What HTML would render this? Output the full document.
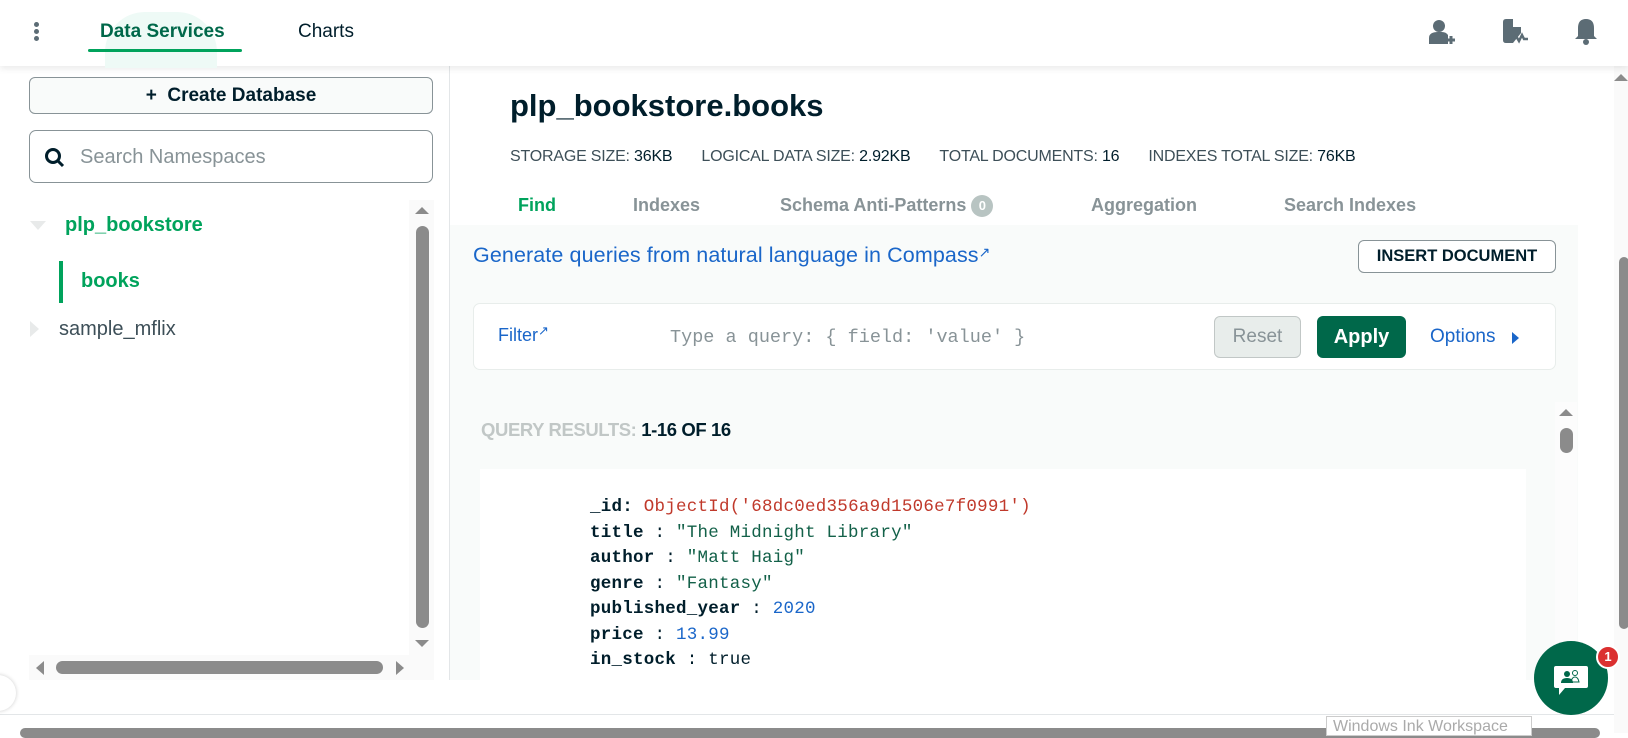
<!DOCTYPE html>
<html><head><meta charset="utf-8"><style>
*{box-sizing:border-box;margin:0;padding:0}
body{width:1628px;height:733px;overflow:hidden;background:#fff;font-family:"Liberation Sans",sans-serif;position:relative;color:#001e2b}
.a{position:absolute}
.mono{font-family:"Liberation Mono",monospace}
</style></head><body>
<!-- header -->
<div class="a" style="left:0;top:0;width:1628px;height:66px;background:#fff;box-shadow:0 3px 6px rgba(0,0,0,.08);z-index:2">
  <div class="a" style="left:105px;top:12px;width:112px;height:56px;background:#eefaf6;border-radius:40px 40px 0 0"></div>
  <div class="a" style="left:34px;top:22px;width:5px;height:5px;border-radius:50%;background:#5c6c75;box-shadow:0 7px 0 #5c6c75,0 14px 0 #5c6c75"></div>
  <div class="a" style="left:100px;top:21px;font-size:19px;font-weight:bold;color:#00684a">Data Services</div>
  <div class="a" style="left:88px;top:49px;width:154px;height:3px;background:#00a35c;border-radius:2px"></div>
  <div class="a" style="left:298px;top:21px;font-size:19px;color:#001e2b">Charts</div>
  <svg class="a" style="left:1428px;top:18px" width="28" height="30" viewBox="0 0 28 30"><circle cx="11" cy="8" r="6" fill="#5c6c75"/><path d="M1 26v-6q0-6 9-6h4q4 0 6 3v9z" fill="#5c6c75"/><path d="M19 22h8M23 18v8" stroke="#5c6c75" stroke-width="3"/></svg>
  <svg class="a" style="left:1500px;top:18px" width="30" height="30" viewBox="0 0 30 30"><path d="M3 4q0-3 3-3h7v8h8v6l-8 10H6q-3 0-3-3z" fill="#5c6c75"/><path d="M12 22l4-4 3 5 3-6 2 4h4" stroke="#5c6c75" stroke-width="2.5" fill="none"/></svg>
  <svg class="a" style="left:1573px;top:17px" width="26" height="30" viewBox="0 0 26 30"><path d="M13 2q8 0 8 9v8l3 3H2l3-3v-8q0-9 8-9z" fill="#5c6c75"/><circle cx="13" cy="25" r="3" fill="#5c6c75"/></svg>
</div>
<!-- sidebar -->
<div class="a" style="left:449px;top:66px;width:1px;height:614px;background:#e3e6e8"></div>
<div class="a" style="left:29px;top:77px;width:404px;height:37px;border:1px solid #889397;border-radius:6px;background:#f9fbfa;text-align:center;font-size:19px;font-weight:bold;line-height:35px">+&nbsp; Create Database</div>
<div class="a" style="left:29px;top:130px;width:404px;height:53px;border:1px solid #889397;border-radius:7px;background:#fff"></div>
<svg class="a" style="left:44px;top:147px" width="22" height="22" viewBox="0 0 22 22"><circle cx="9" cy="9" r="6.5" stroke="#001e2b" stroke-width="3" fill="none"/><path d="M14 14l5 5" stroke="#001e2b" stroke-width="3"/></svg>
<div class="a" style="left:80px;top:146px;font-size:20px;color:#889397">Search Namespaces</div>
<div class="a" style="left:30px;top:221px;width:0;height:0;border-left:8px solid transparent;border-right:8px solid transparent;border-top:9px solid #e8eaea"></div>
<div class="a" style="left:65px;top:214px;font-size:20px;font-weight:bold;color:#00a35c">plp_bookstore</div>
<div class="a" style="left:59px;top:261px;width:4px;height:42px;background:#00a35c"></div>
<div class="a" style="left:81px;top:270px;font-size:20px;font-weight:bold;color:#00a35c">books</div>
<div class="a" style="left:30px;top:321px;width:0;height:0;border-top:8px solid transparent;border-bottom:8px solid transparent;border-left:9px solid #e8eaea"></div>
<div class="a" style="left:59px;top:318px;font-size:20px;color:#3d4f58">sample_mflix</div>
<div class="a" style="left:409px;top:200px;width:25px;height:455px;background:#fafafa"></div>
<div class="a" style="left:415px;top:207px;border-left:7px solid transparent;border-right:7px solid transparent;border-bottom:7px solid #8b8b8b"></div>
<div class="a" style="left:416px;top:226px;width:13px;height:402px;border-radius:7px;background:#8b8b8b"></div>
<div class="a" style="left:415px;top:640px;border-left:7px solid transparent;border-right:7px solid transparent;border-top:7px solid #8b8b8b"></div>
<div class="a" style="left:29px;top:655px;width:405px;height:25px;background:#fafafa"></div>
<div class="a" style="left:36px;top:661px;border-top:7px solid transparent;border-bottom:7px solid transparent;border-right:8px solid #8b8b8b"></div>
<div class="a" style="left:56px;top:661px;width:327px;height:13px;border-radius:7px;background:#8b8b8b"></div>
<div class="a" style="left:396px;top:661px;border-top:7px solid transparent;border-bottom:7px solid transparent;border-left:8px solid #8b8b8b"></div>
<!-- main -->
<div class="a" style="left:510px;top:88px;font-size:31px;font-weight:bold">plp_bookstore.books</div>
<div class="a" style="left:510px;top:148px;font-size:16px;color:#3d4f58;letter-spacing:-.2px"><span>STORAGE SIZE: <span style="color:#001e2b">36KB</span></span><span style="margin-left:29px">LOGICAL DATA SIZE: <span style="color:#001e2b">2.92KB</span></span><span style="margin-left:29px">TOTAL DOCUMENTS: <span style="color:#001e2b">16</span></span><span style="margin-left:29px">INDEXES TOTAL SIZE: <span style="color:#001e2b">76KB</span></span></div>
<div class="a" style="left:518px;top:195px;font-size:18px;font-weight:bold;color:#00a35c">Find</div>
<div class="a" style="left:633px;top:195px;font-size:18px;font-weight:bold;color:#889397">Indexes</div>
<div class="a" style="left:780px;top:195px;font-size:18px;font-weight:bold;color:#889397">Schema Anti-Patterns <span style="display:inline-block;width:22px;height:22px;border-radius:50%;background:#b8c4c2;color:#fff;font-size:13px;text-align:center;line-height:22px;vertical-align:1px">0</span></div>
<div class="a" style="left:1091px;top:195px;font-size:18px;font-weight:bold;color:#889397">Aggregation</div>
<div class="a" style="left:1284px;top:195px;font-size:18px;font-weight:bold;color:#889397">Search Indexes</div>
<div class="a" style="left:450px;top:225px;width:1128px;height:455px;background:#f9fbfa"></div>
<div class="a" style="left:473px;top:243px;font-size:21.5px;color:#1a66c9;letter-spacing:.1px">Generate queries from natural language in Compass<span style="font-size:14px;vertical-align:5px">&#x2197;</span></div>
<div class="a" style="left:1358px;top:240px;width:198px;height:33px;border:1px solid #889397;border-radius:6px;background:#fff;font-size:16.5px;font-weight:bold;text-align:center;line-height:31px">INSERT DOCUMENT</div>
<div class="a" style="left:473px;top:303px;width:1083px;height:67px;border:1px solid #e8edeb;border-radius:7px;background:#fff"></div>
<div class="a" style="left:498px;top:323px;font-size:18px;color:#1a66c9">Filter<span style="font-size:13px;vertical-align:6px">&#x2197;</span></div>
<div class="a mono" style="left:670px;top:327px;font-size:18.5px;color:#889397">Type a query: { field: 'value' }</div>
<div class="a" style="left:1214px;top:316px;width:87px;height:42px;border:1px solid #c1c7c6;border-radius:6px;background:#e8edeb;color:#889397;font-size:19px;text-align:center;line-height:40px">Reset</div>
<div class="a" style="left:1317px;top:316px;width:89px;height:42px;border-radius:6px;background:#00684a;color:#fff;font-size:20px;font-weight:bold;text-align:center;line-height:42px">Apply</div>
<div class="a" style="left:1430px;top:326px;font-size:19px;color:#1a66c9">Options</div>
<div class="a" style="left:1512px;top:332px;border-top:6px solid transparent;border-bottom:6px solid transparent;border-left:7px solid #1a66c9"></div>
<div class="a" style="left:481px;top:419px;font-size:18.5px;font-weight:bold;letter-spacing:-.4px;color:#c1c7c6">QUERY RESULTS: <span style="color:#001e2b">1-16 OF 16</span></div>
<div class="a" style="left:480px;top:469px;width:1046px;height:211px;background:#fff"></div>
<div class="a mono" style="left:590px;top:495px;font-size:17.5px;letter-spacing:.25px;line-height:25.5px;color:#001e2b">
<div><b>_id:</b> <span style="color:#c0392b">ObjectId('68dc0ed356a9d1506e7f0991')</span></div>
<div><b>title</b> : <span style="color:#136149">"The Midnight Library"</span></div>
<div><b>author</b> : <span style="color:#136149">"Matt Haig"</span></div>
<div><b>genre</b> : <span style="color:#136149">"Fantasy"</span></div>
<div><b>published_year</b> : <span style="color:#1a66c9">2020</span></div>
<div><b>price</b> : <span style="color:#1a66c9">13.99</span></div>
<div><b>in_stock</b> : true</div>
</div>
<div class="a" style="left:1555px;top:402px;width:22px;height:278px;background:#fcfcfc"></div>
<div class="a" style="left:1559px;top:409px;border-left:7px solid transparent;border-right:7px solid transparent;border-bottom:7px solid #8b8b8b"></div>
<div class="a" style="left:1560px;top:428px;width:13px;height:25px;border-radius:7px;background:#8b8b8b"></div>
<!-- page scroll -->
<div class="a" style="left:1614px;top:66px;width:14px;height:667px;background:#fafafa"></div>
<div class="a" style="left:1614px;top:74px;border-left:7px solid transparent;border-right:7px solid transparent;border-bottom:7px solid #8b8b8b"></div>
<div class="a" style="left:1619px;top:257px;width:10px;height:372px;border-radius:6px;background:#8b8b8b"></div>
<!-- bottom -->
<div class="a" style="left:0;top:714px;width:1614px;height:1px;background:#e3e6e8"></div>
<div class="a" style="left:-20px;top:675px;width:36px;height:36px;border-radius:50%;background:#fff;box-shadow:0 0 4px rgba(0,0,0,.2)"></div>
<div class="a" style="left:20px;top:728px;width:1580px;height:10px;border-radius:6px;background:#8b8b8b"></div>
<div class="a" style="left:1326px;top:716px;width:206px;height:20px;border:1px solid #ccc;background:#fff;font-size:16px;color:#aaa;padding-left:6px;line-height:20px">Windows Ink Workspace</div>
<!-- chat -->
<div class="a" style="left:1534px;top:641px;width:74px;height:74px;border-radius:50%;background:#00684a"></div>
<svg class="a" style="left:1553px;top:664px" width="36" height="34" viewBox="0 0 36 34"><path d="M3 2h30q2 0 2 2v18q0 2-2 2H12l-6 7v-7H3q-2 0-2-2V4q0-2 2-2z" fill="#fff"/><circle cx="14" cy="10" r="3" fill="#00684a"/><path d="M8 19q0-5 6-5t6 5z" fill="#00684a"/><circle cx="22" cy="9" r="2.5" stroke="#00684a" fill="none"/><path d="M18 18q1-5 4-5t4 5z" stroke="#00684a" fill="none"/></svg>
<div class="a" style="left:1596px;top:645px;width:24px;height:24px;border-radius:50%;background:#db3030;border:2px solid #fff;color:#fff;font-size:13px;font-weight:bold;text-align:center;line-height:20px">1</div>
</body></html>
